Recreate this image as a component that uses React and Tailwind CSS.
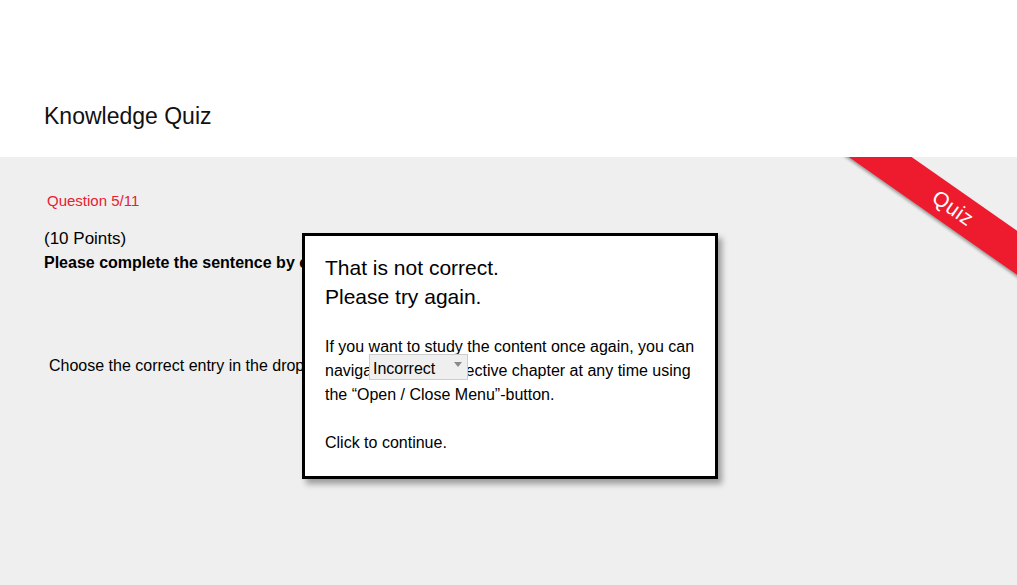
// ─── Ribbon ──────────────────────────────────────────────────────────────────
function Ribbon() {
  return (
    <div className="absolute inset-0 overflow-hidden pointer-events-none">
      <div
        className="absolute left-[803px] top-[33px] w-[300px] h-[36px] rotate-[35deg]
                   bg-[#ee1b2e] shadow-[0_2px_3px_rgba(0,0,0,0.35)]
                   flex items-center justify-center"
      >
        <span className="text-white text-[21px] font-light tracking-wide">Quiz</span>
      </div>
    </div>
  )
}

// ─── Feedback dialog ────────────────────────────────────────────────────────
function Feedback() {
  return (
    <div
      className="absolute left-[302px] top-[76px] w-[416px] h-[246px] bg-white
                 border-[3px] border-black shadow-[4px_5px_6px_rgba(0,0,0,0.35)]
                 px-[20px] pt-[17px] text-black"
    >
      <p className="text-[21px] leading-[29px]">That is not correct.</p>
      <p className="text-[21px] leading-[29px]">Please try again.</p>
      <p className="mt-[24px] text-[16px] leading-[24px]">
        If you want to study the content once again, you can navigate to the respective
        chapter at any time using the “Open / Close Menu”-button.
      </p>
      <p className="mt-[24px] text-[16px] leading-[24px]">Click to continue.</p>
    </div>
  )
}

// ─── Dropdown ───────────────────────────────────────────────────────────────
function Dropdown() {
  return (
    <div
      className="absolute left-[369px] top-[197px] w-[99px] h-[26px] bg-[#efefef]
                 border border-[#cdcdcd] flex items-center pl-[3px] pr-[5px] pt-[3px]"
    >
      <span className="text-[16px] text-black flex-1">Incorrect</span>
      <span className="w-0 h-0 -mt-[8px] border-l-[4px] border-r-[4px] border-t-[5px]
                       border-l-transparent border-r-transparent border-t-[#8a8a8a]" />
    </div>
  )
}

// ─── Page ───────────────────────────────────────────────────────────────────
export default function App() {
  return (
    <div className="w-[1017px] h-[585px] flex flex-col bg-white font-['Liberation_Sans',Arial,sans-serif]">
      <header className="h-[157px] flex-shrink-0 flex items-end pl-[44px] pb-[24px]">
        <h1 className="text-[23px] text-[#111]">Knowledge Quiz</h1>
      </header>

      <main className="relative flex-1 bg-[#efefef] overflow-hidden">
        <div className="pl-[44px] pt-[33px]">
          <p className="ml-[3px] text-[15px] text-[#e8202f]">Question 5/11</p>
          <p className="mt-[15px] text-[17px] leading-[22px] text-black">(10 Points)</p>
          <p className="text-[16px] leading-[26px] font-bold text-black">
            Please complete the sentence by choosing the correct entry.
          </p>
          <p className="mt-[78px] ml-[5px] text-[16px] text-black">
            Choose the correct entry in the dropdown menu to complete the sentence.
          </p>
        </div>

        <Ribbon />
        <Feedback />
        <Dropdown />
      </main>
    </div>
  )
}
